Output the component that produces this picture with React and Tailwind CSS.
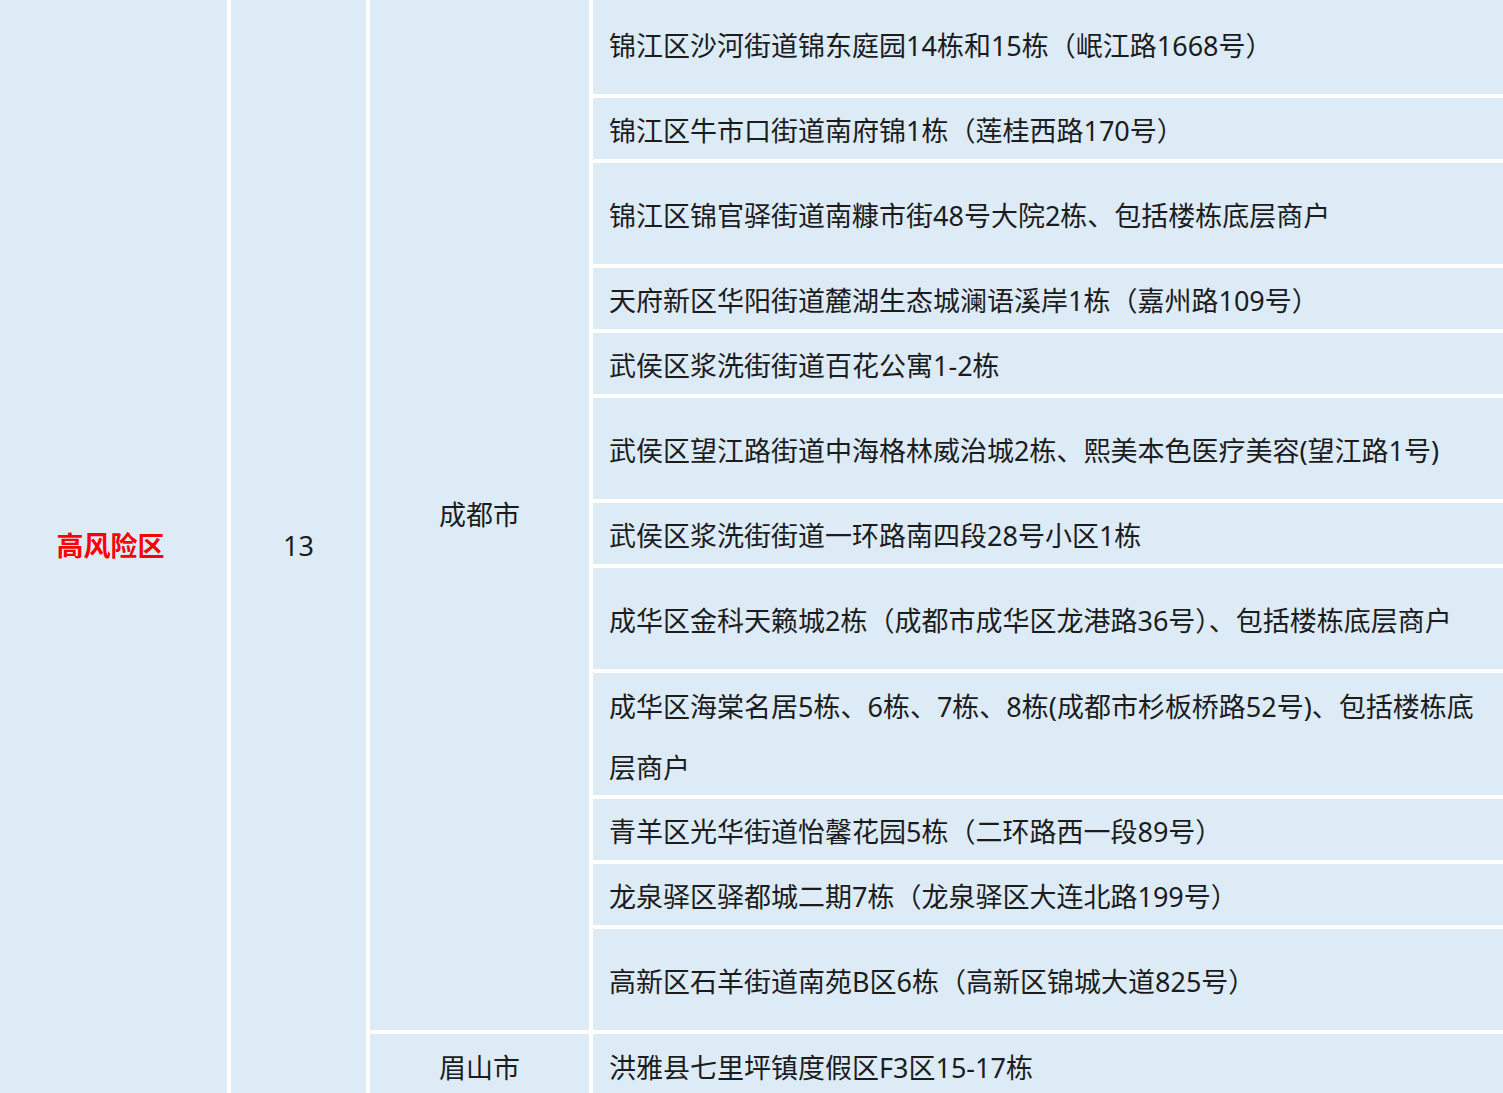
import React from "react";

const rows = [
  { h: "h-[94px]", t: "锦江区沙河街道锦东庭园14栋和15栋（岷江路1668号）" },
  { h: "h-[61px]", t: "锦江区牛市口街道南府锦1栋（莲桂西路170号）" },
  { h: "h-[101px]", t: "锦江区锦官驿街道南糠市街48号大院2栋、包括楼栋底层商户" },
  { h: "h-[61px]", t: "天府新区华阳街道麓湖生态城澜语溪岸1栋（嘉州路109号）" },
  { h: "h-[61px]", t: "武侯区浆洗街街道百花公寓1-2栋" },
  { h: "h-[101px]", t: "武侯区望江路街道中海格林威治城2栋、熙美本色医疗美容(望江路1号)" },
  { h: "h-[61px]", t: "武侯区浆洗街街道一环路南四段28号小区1栋" },
  { h: "h-[101px]", t: "成华区金科天籁城2栋（成都市成华区龙港路36号）、包括楼栋底层商户" },
  { h: "h-[122px]", t: null },
  { h: "h-[61px]", t: "青羊区光华街道怡馨花园5栋（二环路西一段89号）" },
  { h: "h-[61px]", t: "龙泉驿区驿都城二期7栋（龙泉驿区大连北路199号）" },
  { h: "h-[101px]", t: "高新区石羊街道南苑B区6栋（高新区锦城大道825号）" },
];

export default function App() {
  return (
    <div
      className="w-[1503px] h-[1093px] overflow-hidden bg-white text-[#1c1c1c] text-[27px]"
      style={{ fontFamily: '"Noto Sans", "Noto Sans CJK SC", sans-serif' }}
    >
      <div className="flex gap-[4px] bg-white">
        <div className="w-[227px] shrink-0 bg-[#ddebf7] flex items-center justify-center pb-[10px] pr-[6px] h-[1102px]">
          <span className="text-[#ff0000] font-bold">高风险区</span>
        </div>
        <div className="w-[135px] shrink-0 bg-[#ddebf7] flex items-center justify-center pb-[10px] h-[1102px]">
          13
        </div>
        <div className="flex flex-col gap-[4px] flex-1">
          <div className="flex gap-[4px]">
            <div className="w-[219px] shrink-0 bg-[#ddebf7] flex items-center justify-center">
              成都市
            </div>
            <div className="flex flex-col gap-[4px] flex-1">
              {rows.map((r, i) => (
                <div
                  key={i}
                  className={`${r.h} ${i === 0 ? "pb-[2px]" : "pt-[6px]"} bg-[#ddebf7] flex items-center pl-[16px] whitespace-nowrap`}
                >
                  {r.t ? (
                    r.t
                  ) : (
                    <div className="leading-[61px]">
                      成华区海棠名居5栋、6栋、7栋、8栋(成都市杉板桥路52号)、包括楼栋底
                      <br />
                      层商户
                    </div>
                  )}
                </div>
              ))}
            </div>
          </div>
          <div className="flex gap-[4px]">
            <div className="w-[219px] shrink-0 h-[68px] bg-[#ddebf7] flex items-center justify-center">
              眉山市
            </div>
            <div className="flex-1 h-[68px] bg-[#ddebf7] flex items-center pl-[16px] whitespace-nowrap">
              洪雅县七里坪镇度假区F3区15-17栋
            </div>
          </div>
        </div>
      </div>
    </div>
  );
}
